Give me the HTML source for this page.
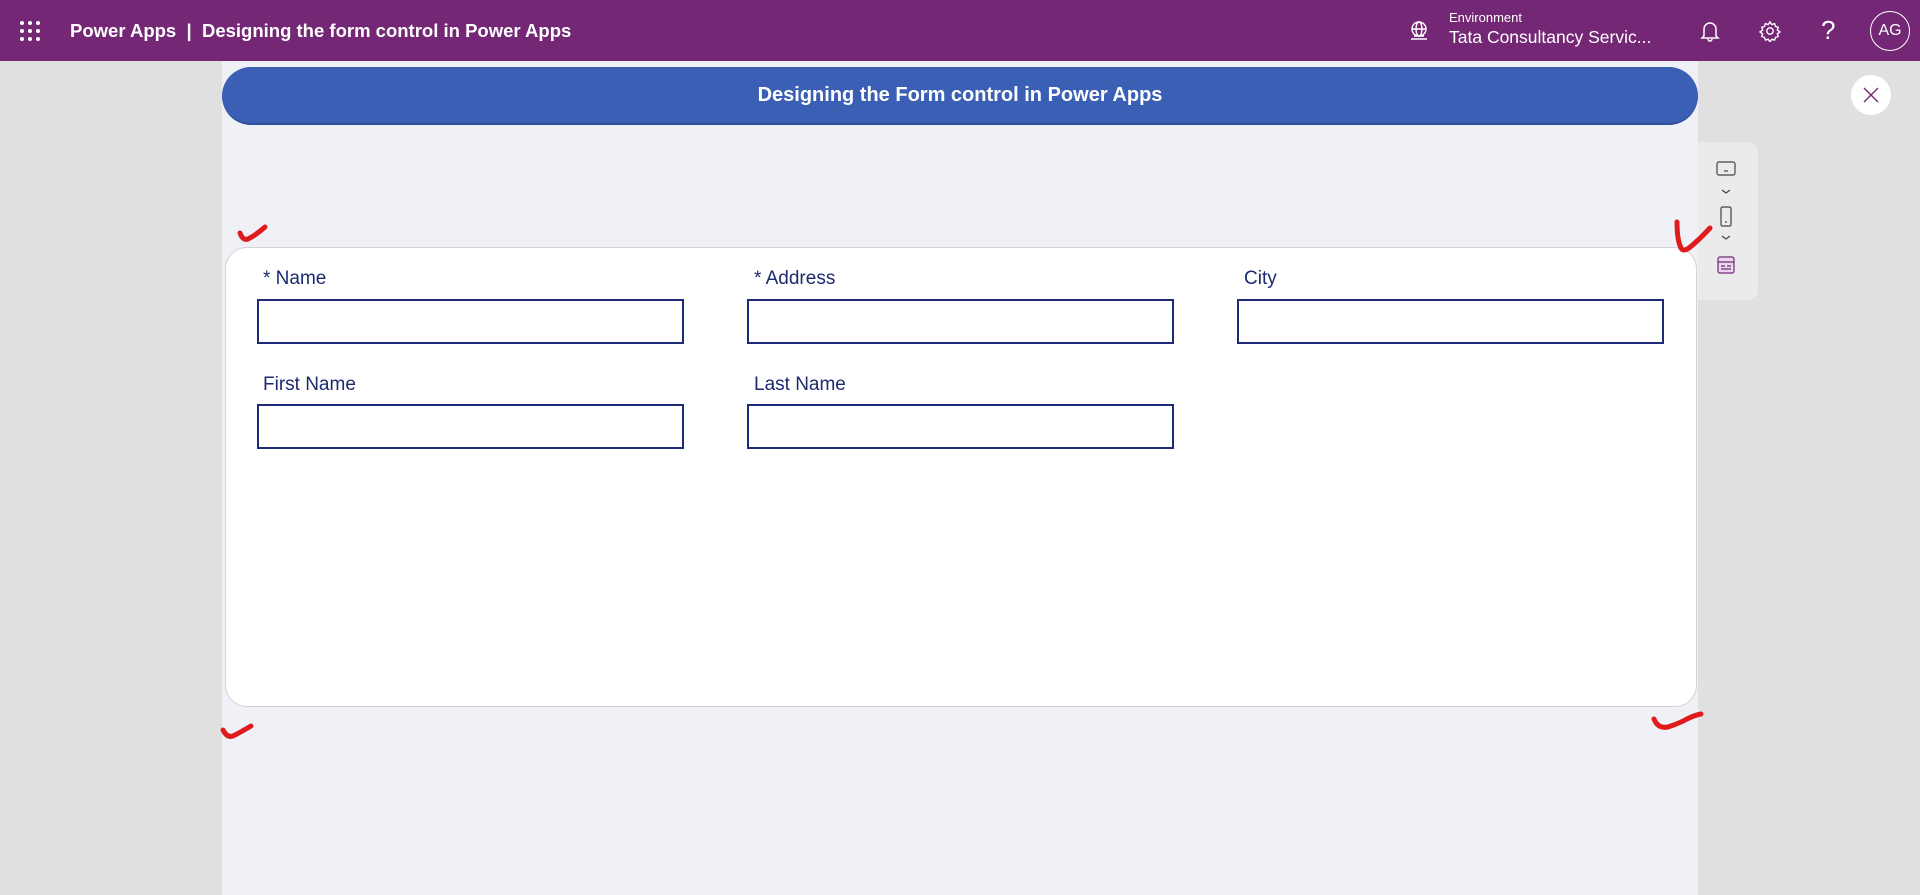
<!DOCTYPE html>
<html><head><meta charset="utf-8"><style>
*{margin:0;padding:0;box-sizing:border-box}
body{width:1920px;height:895px;overflow:hidden;background:#e1e0e0;font-family:"Liberation Sans",sans-serif;position:relative}
.hdr{position:absolute;left:0;top:0;width:1920px;height:61px;background:#742774;color:#fff}
.abs{position:absolute}
.canvas{position:absolute;left:222px;top:61px;width:1476px;height:834px;background:#eff1f6}
.tb{position:absolute;left:222px;top:67px;width:1476px;height:58px;background:#3a5fb4;border-radius:29px;border-bottom:2px solid #2f4f9a;color:#fff;font-weight:bold;font-size:20px;text-align:center;line-height:57px}
.card{position:absolute;left:225px;top:247px;width:1472px;height:460px;background:#fff;border:1px solid #d4d4d8;border-radius:22px}
.lbl{position:absolute;font-size:19px;color:#1c2a6e}
.inp{position:absolute;width:427px;height:45px;border:2px solid #1f2a78;background:#fff}
</style></head><body>
<div class="hdr">
<svg class="abs" style="left:19px;top:20px" width="22" height="22" viewBox="0 0 22 22" fill="#fff"><circle cx="3" cy="3" r="2"/><circle cx="11" cy="3" r="2"/><circle cx="19" cy="3" r="2"/><circle cx="3" cy="11" r="2"/><circle cx="11" cy="11" r="2"/><circle cx="19" cy="11" r="2"/><circle cx="3" cy="19" r="2"/><circle cx="11" cy="19" r="2"/><circle cx="19" cy="19" r="2"/></svg>
<div class="abs" style="left:70px;top:20px;font-size:18.5px;font-weight:bold;white-space:nowrap">Power Apps &nbsp;|&nbsp; Designing the form control in Power Apps</div>
<svg class="abs" style="left:1408px;top:20px" width="22" height="22" viewBox="0 0 22 22" fill="none" stroke="#fff" stroke-width="1.4"><circle cx="11" cy="9" r="7"/><ellipse cx="11" cy="9" rx="3" ry="7"/><path d="M4 9h14M3 19h16M6 16h10"/></svg>
<div class="abs" style="left:1449px;top:10px;font-size:13px">Environment</div>
<div class="abs" style="left:1449px;top:27px;font-size:17.5px;white-space:nowrap">Tata Consultancy Servic...</div>
<svg class="abs" style="left:1700px;top:20px" width="20" height="22" viewBox="0 0 20 22" fill="none" stroke="#fff" stroke-width="1.5"><path d="M4 16V9a6 6 0 0 1 12 0v7l2 2H2z M8 19a2 2 0 0 0 4 0"/></svg>
<svg class="abs" style="left:1759px;top:20px" width="22" height="22" viewBox="0 0 24 24" fill="none" stroke="#fff" stroke-width="1.5"><circle cx="12" cy="12" r="3.5"/><path d="M12 2l2 3 3-1 1 3 3 1-1 3 3 2-3 2 1 3-3 1-1 3-3-1-2 3-2-3-3 1-1-3-3-1 1-3-3-2 3-2-1-3 3-1 1-3 3 1z"/></svg>
<div class="abs" style="left:1821px;top:15px;font-size:26px;font-weight:300">?</div>
<div class="abs" style="left:1870px;top:11px;width:40px;height:40px;border:1px solid #fff;border-radius:50%;text-align:center;line-height:38px;font-size:16px">AG</div>
</div>
<div class="canvas"></div>
<div class="tb">Designing the Form control in Power Apps</div>
<div class="abs" style="left:1851px;top:75px;width:40px;height:40px;border-radius:50%;background:#fff"></div>
<svg class="abs" style="left:1862px;top:86px" width="18" height="18" viewBox="0 0 18 18" stroke="#742774" stroke-width="1.4"><path d="M2 2l14 14M16 2L2 16"/></svg>
<div class="abs" style="left:1698px;top:142px;width:60px;height:158px;background:#ebebeb;border-radius:0 10px 10px 0"></div>
<svg class="abs" style="left:1710px;top:158px" width="30" height="130" viewBox="0 0 30 130" fill="none" stroke="#444" stroke-width="1.2"><rect x="7" y="4" width="18" height="13" rx="2"/><path d="M14 13h4"/><path d="M12 32l4 3 4-3"/><rect x="11" y="49" width="10" height="19" rx="1.5"/><path d="M15 64h2"/><path d="M12 78l4 3 4-3"/><rect x="8" y="99" width="16" height="16" rx="2" stroke="#742774" fill="#e8d8ee"/><path d="M8 104h16M11 108h4M17 108h4M11 111h10" stroke="#742774"/></svg>
<div class="card"></div>
<div class="lbl" style="left:263px;top:268px">* Name</div>
<div class="lbl" style="left:754px;top:268px">* Address</div>
<div class="lbl" style="left:1244px;top:268px">City</div>
<div class="lbl" style="left:263px;top:374px">First Name</div>
<div class="lbl" style="left:754px;top:374px">Last Name</div>
<div class="inp" style="left:257px;top:299px"></div>
<div class="inp" style="left:747px;top:299px"></div>
<div class="inp" style="left:1237px;top:299px"></div>
<div class="inp" style="left:257px;top:404px"></div>
<div class="inp" style="left:747px;top:404px"></div>
<svg class="abs" style="left:0;top:0" width="1920" height="895" fill="none" stroke="#e01b1b" stroke-width="5" stroke-linecap="round">
<path d="M240 233 q3 8 8 6 q8 -4 17 -12"/>
<path d="M1677 222 q0 18 4 26 q2 4 8 0 q10 -8 21 -20"/>
<path d="M223 730 q4 8 10 6 q8 -4 18 -10"/>
<path d="M1654 719 q4 10 14 8 q12 -4 19 -8 q8 -4 14 -5"/>
</svg>
</body></html>
